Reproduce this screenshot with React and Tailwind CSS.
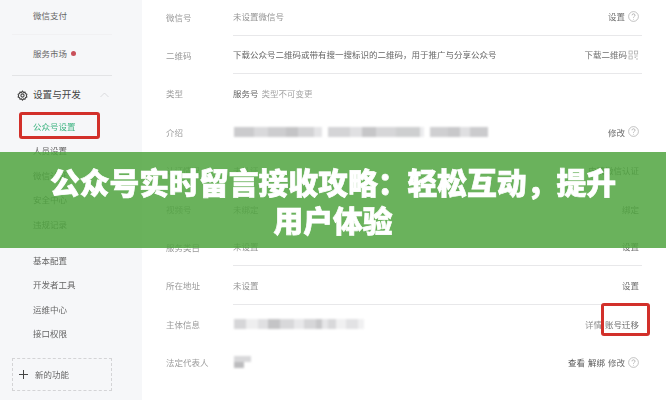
const font = { fontFamily: '"Noto Sans CJK SC", "Liberation Sans", sans-serif' };

function Help() {
  return (
    <svg width="11" height="11" viewBox="0 0 11 11" className="ml-[3px] shrink-0" fill="none">
      <circle cx="5.5" cy="5.5" r="4.9" stroke="#9a9a9a" strokeWidth="0.6" />
      <path d="M4 4.3c0-2 3-2 3 0 0 1.1-1.5 1.1-1.5 2.4" stroke="#8a8a8a" strokeWidth="0.6" />
      <circle cx="5.5" cy="8.2" r="0.4" fill="#8a8a8a" />
    </svg>
  );
}

function Qr() {
  return (
    <svg width="11" height="10" viewBox="0 0 11 10" className="ml-[1px] shrink-0" fill="none" stroke="#a5a5a5" strokeWidth="0.7">
      <rect x="1" y="1" width="3.2" height="3" />
      <rect x="6.5" y="1" width="3.2" height="3" />
      <rect x="1" y="6" width="3.2" height="3" />
      <path d="M6.5 6h3.2M6.5 7.5h1.5M8 9h2" />
    </svg>
  );
}

// Mosaic redaction: list of [width, grey] pairs
function Blur({ parts }) {
  return (
    <div className="flex h-[10px] blur-[1.2px]">
      {parts.map(([w, c], i) => (
        <div key={i} className="h-full" style={{ width: w, background: c }} />
      ))}
    </div>
  );
}

function Row({ label, line = true, children, right }) {
  return (
    <div className="flex h-[38.4px] shrink-0">
      <div className="w-[67px] shrink-0 flex items-center text-[#9b9b9b]">{label}</div>
      <div className={`flex-1 flex items-center justify-between pr-[3px] ${line ? "border-b border-[#e8e8ea]" : ""}`}>
        <div className="flex items-center text-[#949494]">{children}</div>
        <div className="flex items-center text-[#707070]">{right}</div>
      </div>
    </div>
  );
}

function Nav({ children, color = "text-[#666]", h = "h-[24.4px]" }) {
  return <div className={`${h} pl-[33px] flex items-center ${color}`}>{children}</div>;
}

const intro1 = [[20, "#cbcbcd"], [14, "#d9d9db"], [18, "#cdcdcf"], [12, "#c4c4c6"], [16, "#d3d3d5"], [8, "#e4e4e6"]];
const intro2 = [[22, "#d4d4d6"], [12, "#e0e0e2"], [14, "#c6c6c8"], [20, "#d6d6d8"], [24, "#cecfd0"], [4, "#ececee"]];
const intro3 = [[18, "#cfcfd1"], [12, "#c8c8ca"], [10, "#dfdfe1"], [18, "#cbcbcd"]];
const subject = [[12, "#d6d6d8"], [12, "#eeeeef"], [10, "#e0e0e2"], [12, "#c4c4c6"], [14, "#d8d8da"], [10, "#e8e8ea"], [12, "#d6d6d8"], [6, "#c8c8ca"], [6, "#e6e6e8"], [8, "#d8d8da"], [10, "#f0f0f1"], [12, "#e2e2e4"], [6, "#f0f0f1"]];

export default function App() {
  return (
    <div className="relative w-[666px] h-[400px] overflow-hidden bg-white text-[8.5px] leading-none" style={font}>
      <div className="flex h-full blur-[0.45px]">
        <aside className="w-[142px] shrink-0 bg-[#f6f7f9] flex flex-col pl-[12px] pr-[30px]">
          <div className="h-[35px] flex items-center pl-[21px] pb-[3px] border-b border-[#f1f1f3] text-[#666]">微信支付</div>
          <div className="h-[41px] flex items-center pl-[21px] pb-[4px] border-b border-[#e3e4e6] text-[#666]">
            服务市场
            <span className="ml-[4px] w-[5px] h-[5px] rounded-full bg-[#c9505a]" />
          </div>
          <div className="h-[38px] flex items-center text-[#444] text-[9.6px]">
            <svg width="11" height="11" viewBox="0 0 24 24" className="ml-[5px] mr-[5px]" fill="none" stroke="#444" strokeWidth="2.4">
              <path d="M12 2.5l2.2 2.6 3.3-.5 1 3.2 3 1.4-1 3.1 1 2.9-3 1.6-1 3-3.3-.4L12 22l-2.2-2.6-3.3.4-1-3-3-1.6 1-2.9-1-3.1 3-1.4 1-3.2 3.3.5z" />
              <circle cx="12" cy="12" r="3.5" />
            </svg>
            设置与开发
            <svg width="9" height="6" viewBox="0 0 9 6" className="ml-[19px]" fill="none" stroke="#cfcfd2" strokeWidth="0.7">
              <path d="M0.5 5L4.5 1l4 4" />
            </svg>
          </div>
          <div className="-ml-[12px] -mr-[30px]">
            <Nav color="text-[#3eb481]">
              <span className="relative">
                公众号设置
                <span className="absolute -left-[14px] -top-[10px] w-[81px] h-[27.5px] border-[3px] border-[#d2302a] rounded-[3px]" />
              </span>
            </Nav>
            <Nav>人员设置</Nav>
            <Nav>微信认证</Nav>
            <Nav>安全中心</Nav>
            <Nav>违规记录</Nav>
            <Nav h="h-[12px]" />
            <Nav>基本配置</Nav>
            <Nav>开发者工具</Nav>
            <Nav>运维中心</Nav>
            <Nav>接口权限</Nav>
          </div>
          <div className="mt-[12.4px] h-[33px] border border-dashed border-[#d4d4d6] flex items-center pl-[6px] text-[#666]">
            <span className="w-[9px] h-[9px] relative mr-[7px]">
              <span className="absolute left-0 right-0 top-[4px] h-px bg-[#444]" />
              <span className="absolute top-0 bottom-0 left-[4px] w-px bg-[#444]" />
            </span>
            新的功能
          </div>
        </aside>

        <main className="flex-1 flex flex-col pl-[24px] pr-[24px] -mt-[2.4px]">
          <Row label="微信号" right={<>设置<Help /></>}>未设置微信号</Row>
          <Row label="二维码" right={<>下载二维码<Qr /></>}>
            <span className="text-[#666]">下载公众号二维码或带有搜一搜标识的二维码，用于推广与分享公众号</span>
          </Row>
          <Row label="类型" line={false}>
            <span className="text-[#666]">服务号</span>
            <span className="ml-[3px] text-[#a5a5a5]">类型不可变更</span>
          </Row>
          <Row label="介绍" line={false} right={<>修改<Help /></>}>
            <div className="ml-[1px] flex gap-[6px]">
              <Blur parts={intro1} />
              <Blur parts={intro2} />
              <Blur parts={intro3} />
            </div>
          </Row>
          <Row label="认证情况" line={false} right={<>申请微信认证</>}>未认证</Row>
          <Row label="视频号" line={false} right="绑定">未绑定</Row>
          <Row label="服务类目" right="设置">未设置</Row>
          <Row label="所在地址" right="设置">未设置</Row>
          <Row
            label="主体信息"
            line={false}
            right={
              <span className="relative flex gap-[3px]">
                <span className="text-[#8f8f8f]">详情</span>
                <span>
                  <span className="absolute left-[16px] -top-[16.5px] w-[49px] h-[33px] border-[3px] border-[#d2302a] rounded-[3px]" />
                  账号迁移
                </span>
              </span>
            }
          >
            <div className="ml-[1px]">
              <Blur parts={subject} />
            </div>
          </Row>
          <Row label="法定代表人" line={false} right={<><span className="text-[#555]">查看</span><span className="ml-[3px] text-[#555]">解绑</span><span className="ml-[3px]">修改</span><Help /></>}>
            <div className="ml-[1px] w-[17px] h-[12px] flex flex-col blur-[1px]">
              <div className="h-[6px] bg-[#d8d8da]" />
              <div className="h-[6px] w-[10px] bg-[#bcbcbe]" />
            </div>
          </Row>
        </main>
      </div>

      <div className="absolute left-0 right-0 top-[152px] h-[96px] bg-[#50a540]/85 flex items-center justify-center">
        <h1 className="w-[580px] text-center text-white text-[29.8px] leading-[38px] font-black [-webkit-text-stroke:0.7px_white]">
          公众号实时留言接收攻略：轻松互动，提升用户体验
        </h1>
      </div>
    </div>
  );
}
